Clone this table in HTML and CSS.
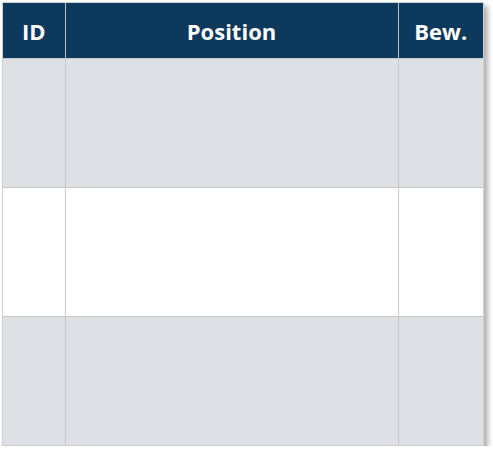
FILE: index.html
```html
<!DOCTYPE html>
<html>
<head>
<meta charset="utf-8">
<link rel="stylesheet" href="styles.css">
</head>
<body>
<div class="wrap">
<table class="grid">
<colgroup><col class="c-id"><col class="c-pos"><col class="c-bew"></colgroup>
<thead>
<tr><th>ID</th><th>Position</th><th>Bew.</th></tr>
</thead>
<tbody>
<tr class="odd"><td></td><td></td><td></td></tr>
<tr class="even"><td></td><td></td><td></td></tr>
<tr class="odd"><td></td><td></td><td></td></tr>
</tbody>
</table>
</div>
</body>
</html>
```
FILE: styles.css
```css
html, body { margin: 0; padding: 0; background: #ffffff; }
body { font-family: "Open Sans", "Liberation Sans", sans-serif; }
.wrap {
  margin: 2px 0 0 2px;
  width: 482px;
  border: 1px solid #cfcfcf;
  box-shadow: 4px 4px 5px rgba(0,0,0,0.3);
  box-sizing: border-box;
}
.grid { border-collapse: collapse; width: 480px; table-layout: fixed; }
.c-id { width: 62px; }
.c-pos { width: 333px; }
.c-bew { width: 85px; }
.grid th {
  height: 55px;
  padding: 0;
  background: #0d395d;
  color: #ffffff;
  font-weight: 700;
  font-size: 22px;
  text-align: center;
  border-left: 1px solid #b9c3cc;
}
.grid th:first-child, .grid td:first-child { border-left: none; }
.grid td {
  height: 128px;
  padding: 0;
  border-left: 1px solid #c8c8c8;
  border-top: 1px solid #c8c8c8;
}
.odd td { background: #dde1e5; }
.even td { background: #ffffff; }
```
